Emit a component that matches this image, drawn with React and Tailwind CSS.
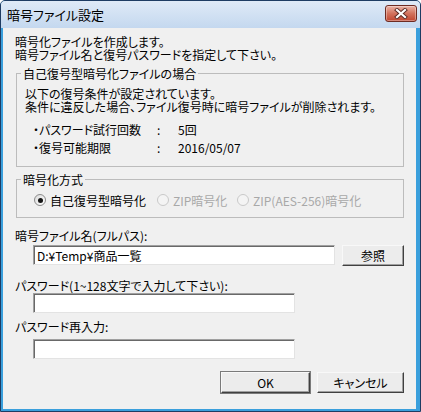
import React from 'react';

const Radio = ({ checked, disabled, label, className }) => (
  <div className={`flex items-center gap-[4px] ${className}`}>
    <div
      className={`w-[12px] h-[12px] rounded-full border flex items-center justify-center ${
        disabled
          ? 'border-[#c9c9c9] bg-[#f4f4f4]'
          : 'border-[#8b8b8b] bg-gradient-to-br from-[#dcdcdc] to-white'
      }`}
    >
      {checked && <div className="w-[5px] h-[5px] rounded-full bg-[#151515]" />}
    </div>
    <span className={disabled ? 'text-[#a8a8a8]' : 'text-black'}>{label}</span>
  </div>
);

const TextBox = ({ value, className }) => (
  <div
    className={`h-[20px] bg-white border border-t-[#a0a0a0] border-l-[#a0a0a0] border-r-[#e3e3e3] border-b-[#e3e3e3] shadow-[inset_1px_1px_0_#696969] pl-[3px] flex items-center leading-[13px] ${className}`}
  >
    {value}
  </div>
);

const Button = ({ children, className, isDefault }) => (
  <div
    className={`h-[21px] flex items-center justify-center bg-[#ececec] border border-t-[#f8f8f8] border-l-[#f8f8f8] border-r-[#404040] border-b-[#404040] shadow-[inset_-1px_-1px_0_#a0a0a0] ${
      isDefault ? 'outline outline-1 outline-[#7a7a7a]' : ''
    } ${className}`}
  >
    {children}
  </div>
);

const GroupBox = ({ title, children }) => (
  <fieldset className="mt-[6px] ml-[1px] p-0 border border-[#bcbcbc]">
    <legend className="ml-[4px] px-[2px] h-[13px] leading-[13px]">{title}</legend>
    {children}
  </fieldset>
);

export default function App() {
  return (
    <div className="w-[421px] h-[412px] flex flex-col bg-[#3a9fdc] border border-[#1e3c63] rounded-t-[5px] overflow-hidden font-['Noto_Sans_CJK_JP',sans-serif] [font-feature-settings:'palt'] text-[12px] text-black">
      {/* title bar */}
      <div className="h-[27px] flex items-start justify-between pl-[6px] pr-[3px] bg-gradient-to-b from-[#dfeaf7] to-[#c4d8ef]">
        <div className="h-[27px] flex items-center text-[13px] leading-[13px] text-black">暗号ファイル設定</div>
        <div className="mt-[4px] w-[32px] h-[17px] rounded-[3px] border border-[#6e2b22] bg-gradient-to-b from-[#eab3a6] via-[#d2725d] to-[#c0452f] flex items-center justify-center shadow-[inset_0_0_0_1px_rgba(255,255,255,0.35)]">
          <svg width="14" height="11" viewBox="0 0 14 11">
            <path d="M3 2 L11 9 M11 2 L3 9" stroke="#5a2a24" strokeWidth="4" strokeLinecap="square" />
            <path d="M3 2 L11 9 M11 2 L3 9" stroke="#ffffff" strokeWidth="2.2" strokeLinecap="square" />
          </svg>
        </div>
      </div>

      {/* client area */}
      <div className="flex-1 ml-[2px] mr-[4px] mb-[2px] bg-[#f0f0f0] px-3 pt-[7px] leading-[13px]">
        <p className="h-[26px]">
          暗号化ファイルを作成します。
          <br />
          暗号ファイル名と復号パスワードを指定して下さい。
        </p>

        <GroupBox title="自己復号型暗号化ファイルの場合">
          <div className="pt-[7px] pl-[8px] pb-[10px]">
            <p className="h-[26px]">
              以下の復号条件が設定されています。
              <br />
              条件に違反した場合、ファイル復号時に暗号ファイルが削除されます。
            </p>
            <div className="mt-[7px] ml-[8px]">
              <div className="h-[18px] flex items-center">
                <span className="w-[124px]">・パスワード試行回数</span>
                <span className="w-[21px]">:</span>
                <span>5回</span>
              </div>
              <div className="h-[18px] flex items-center">
                <span className="w-[124px]">・復号可能期限</span>
                <span className="w-[21px]">:</span>
                <span>2016/05/07</span>
              </div>
            </div>
          </div>
        </GroupBox>

        <GroupBox title="暗号化方式">
          <div className="pt-[7px] pl-[17px] pb-[10px]">
            <div className="h-[14px] flex items-center">
              <Radio checked label="自己復号型暗号化" className="w-[123px]" />
              <Radio disabled label="ZIP暗号化" className="w-[80px]" />
              <Radio disabled label="ZIP(AES-256)暗号化" />
            </div>
          </div>
        </GroupBox>

        <div className="mt-[11px] h-[13px]">暗号ファイル名(フルパス):</div>
        <div className="mt-[3px] flex items-start">
          <TextBox value="D:¥Temp¥商品一覧" className="ml-[18px] w-[303px]" />
          <Button className="ml-[7px] w-[62px]">参照</Button>
        </div>

        <div className="mt-[13px] h-[13px]">パスワード(1~128文字で入力して下さい):</div>
        <TextBox className="mt-[1px] ml-[18px] w-[262px]" />

        <div className="mt-[7px] h-[13px]">パスワード再入力:</div>
        <TextBox className="mt-[6px] ml-[18px] w-[262px]" />

        <div className="mt-[13px] flex justify-end gap-[7px]">
          <Button isDefault className="w-[89px]">OK</Button>
          <Button className="w-[87px]">キャンセル</Button>
        </div>
      </div>
    </div>
  );
}
